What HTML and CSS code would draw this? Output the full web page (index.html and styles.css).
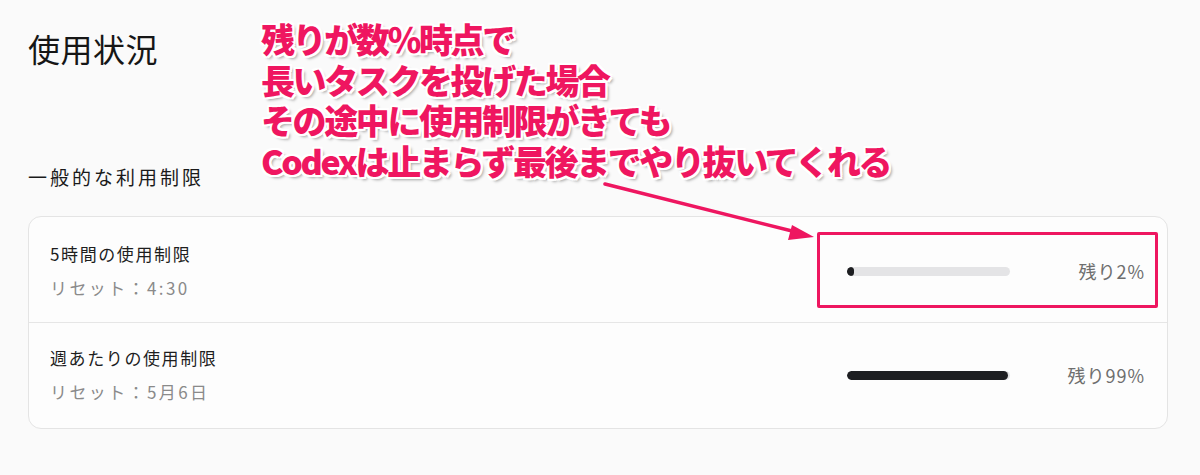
FILE: index.html
```html
<!DOCTYPE html>
<html lang="ja">
<head>
<meta charset="utf-8">
<title>使用状況</title>
<link rel="stylesheet" href="styles.css">
</head>
<body>
<div class="page">
  <h1 class="title">使用状況</h1>
  <h2 class="section">一般的な利用制限</h2>
  <div class="card">
    <div class="row">
      <div class="info">
        <div class="name">5時間の使用制限</div>
        <div class="reset">リセット：4:30</div>
      </div>
      <div class="usage">
        <div class="bar"><div class="fill" style="width:2%"></div></div>
        <span class="pct">残り2%</span>
      </div>
    </div>
    <div class="row">
      <div class="info">
        <div class="name">週あたりの使用制限</div>
        <div class="reset">リセット：5月6日</div>
      </div>
      <div class="usage">
        <div class="bar"><div class="fill" style="width:99%"></div></div>
        <span class="pct">残り99%</span>
      </div>
    </div>
  </div>

  <div class="note">
    <div>残りが数％時点で</div>
    <div>長いタスクを投げた場合</div>
    <div>その途中に使用制限がきても</div>
    <div>Codexは止まらず最後までやり抜いてくれる</div>
  </div>
  <svg class="arrow" width="230" height="70" viewBox="0 0 230 70">
    <line x1="5" y1="5" x2="196" y2="53" stroke="#ee1660" stroke-width="3.5" stroke-linecap="round"/>
    <polygon points="214,58 192,46 188,61" fill="#ee1660"/>
  </svg>
  <div class="highlight"></div>
</div>
</body>
</html>
```

FILE: styles.css
```css
html, body {
  margin: 0;
  padding: 0;
  background: #fafafa;
}

body {
  font-family: "Noto Sans CJK JP", "Noto Sans", sans-serif;
  color: #1a1a1a;
}

.page {
  position: relative;
  width: 1200px;
  height: 475px;
  box-sizing: border-box;
  padding: 26px 32px 0 28px;
  overflow: hidden;
}

.title {
  margin: 0;
  font-size: 32px;
  font-weight: 400;
  line-height: 44px;
  letter-spacing: 0.5px;
  color: #161616;
}

.section {
  margin: 94px 0 0 0;
  font-size: 19px;
  font-weight: 400;
  line-height: 26px;
  letter-spacing: 3px;
  color: #1a1a1a;
}

.card {
  margin-top: 26px;
  background: #fdfdfd;
  border: 1px solid #e4e4e4;
  border-radius: 13px;
}

.row {
  display: flex;
  align-items: center;
  justify-content: space-between;
  padding: 25px 22px 22px 21px;
}

.row + .row {
  border-top: 1px solid #e6e6e6;
  padding-top: 23px;
  padding-bottom: 24px;
}

.info {
  display: flex;
  flex-direction: column;
  gap: 10px;
}

.name {
  font-size: 17px;
  line-height: 24px;
  letter-spacing: 1.6px;
  color: #1e1e1e;
}

.reset {
  font-size: 17px;
  line-height: 24px;
  letter-spacing: 2.4px;
  color: #8a8a8a;
}

.usage {
  display: flex;
  align-items: center;
}

.bar {
  width: 163px;
  height: 9px;
  border-radius: 5px;
  background: #e4e4e6;
  overflow: hidden;
}

.fill {
  min-width: 7px;
  height: 100%;
  border-radius: 5px;
  background: #1d1e21;
}

.pct {
  width: 135px;
  text-align: right;
  font-size: 18px;
  line-height: 24px;
  letter-spacing: 1px;
  color: #6e6e6e;
}

.note {
  position: absolute;
  left: 261px;
  top: 19px;
  font-size: 34px;
  font-weight: 900;
  line-height: 40.5px;
  letter-spacing: -2.4px;
  color: #ef1660;
  text-shadow:
    2px 0 0 #fff, -2px 0 0 #fff, 0 2px 0 #fff, 0 -2px 0 #fff,
    2px 2px 0 #fff, -2px -2px 0 #fff, 2px -2px 0 #fff, -2px 2px 0 #fff,
    3px 3px 3px rgba(0,0,0,0.35);
}

.arrow {
  position: absolute;
  left: 600px;
  top: 179px;
}

.highlight {
  position: absolute;
  left: 817px;
  top: 232px;
  width: 335px;
  height: 70px;
  border: 3px solid #ee1660;
  border-radius: 2px;
}
```
